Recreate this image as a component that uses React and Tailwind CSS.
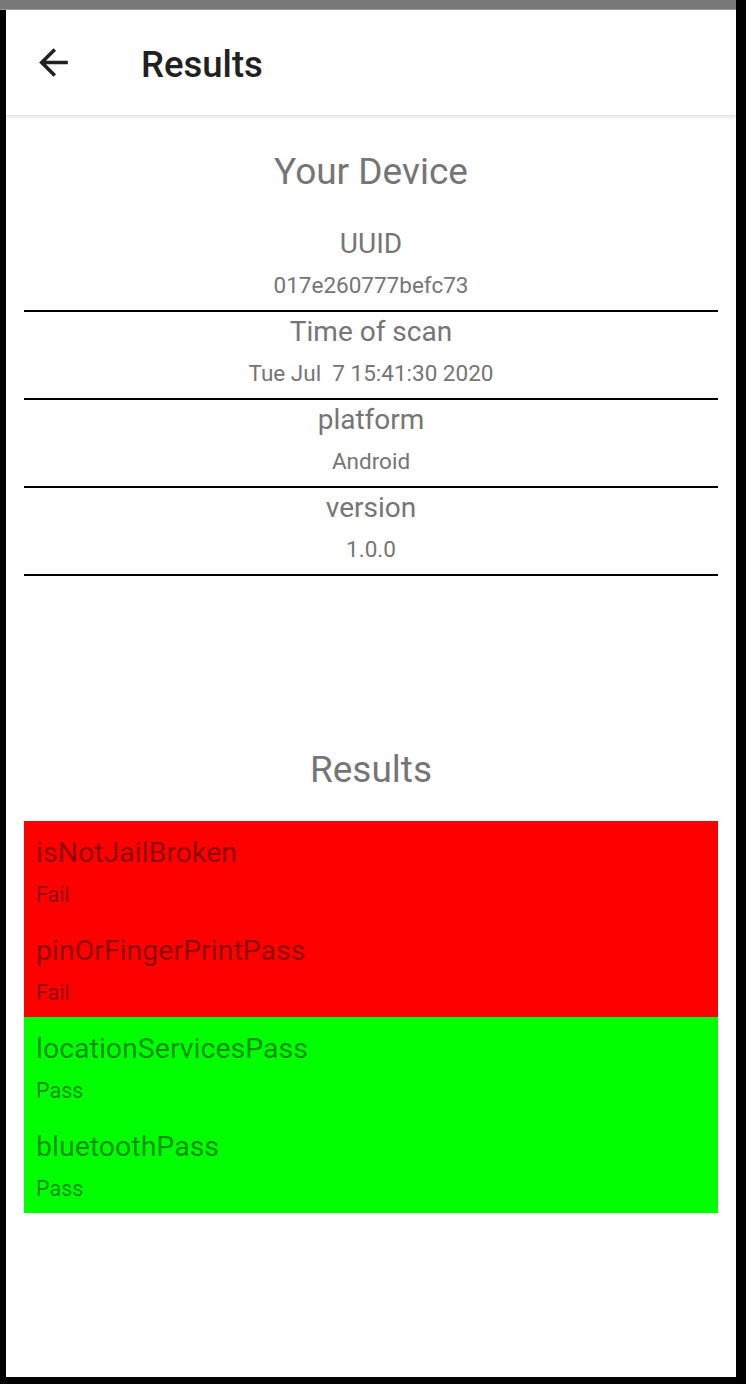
import React from 'react';

const device = [
  { label: 'UUID', value: '017e260777befc73' },
  { label: 'Time of scan', value: 'Tue Jul  7 15:41:30 2020' },
  { label: 'platform', value: 'Android' },
  { label: 'version', value: '1.0.0' },
];

const checks = [
  { name: 'isNotJailBroken', pass: false },
  { name: 'pinOrFingerPrintPass', pass: false },
  { name: 'locationServicesPass', pass: true },
  { name: 'bluetoothPass', pass: true },
];

function BackArrow() {
  return (
    <svg width="43" height="43" viewBox="0 0 24 24" fill="#212121">
      <path d="M20 11H7.83l5.59-5.59L12 4l-8 8 8 8 1.41-1.41L7.83 13H20v-2z" />
    </svg>
  );
}

export default function App() {
  return (
    <div className="w-[746px] h-[1384px] bg-black overflow-hidden font-['Roboto','Liberation_Sans',sans-serif]">
      {/* status bar */}
      <div className="w-[736px] h-[10px] bg-[#787878] border-b border-[#9a9a9a]" />
      <div className="pl-[6px]">
        <div className="w-[730px] h-[1367px] bg-white flex flex-col">
          {/* app bar */}
          <div className="h-[105px] flex items-center pl-[26px] shadow-[0_2px_4px_rgba(0,0,0,0.12)] relative z-10">
            <BackArrow />
            <span className="ml-[66px] pt-[4px] text-[36.5px] leading-[41px] font-medium text-[#212121]">Results</span>
          </div>

          <div className="mx-[18px] flex flex-col">
            <h2 className="mt-[36px] text-center text-[37px] leading-[41px] text-[#757575]">Your Device</h2>
            <div className="mt-[32px] flex flex-col">
              {device.map((d) => (
                <div key={d.label} className="pt-[4px] pb-[12px] border-b-2 border-black flex flex-col items-center text-[#757575]">
                  <span className="text-[28px] leading-[32px]">{d.label}</span>
                  <span className="mt-[12px] text-[22.5px] leading-[26px] whitespace-pre">{d.value}</span>
                </div>
              ))}
            </div>

            <h2 className="mt-[173px] text-center text-[37px] leading-[41px] text-[#757575]">Results</h2>
            <div className="mt-[31px] flex flex-col">
              {checks.map((c) => (
                <div
                  key={c.name}
                  className={`h-[98px] pl-[12px] pt-[16px] flex flex-col text-black/45 ${c.pass ? 'bg-[#00ff00]' : 'bg-[#ff0000]'}`}
                >
                  <span className="text-[28.5px] leading-[32px]">{c.name}</span>
                  <span className="mt-[14px] text-[21.5px] leading-[24px]">{c.pass ? 'Pass' : 'Fail'}</span>
                </div>
              ))}
            </div>
          </div>
        </div>
      </div>
    </div>
  );
}
